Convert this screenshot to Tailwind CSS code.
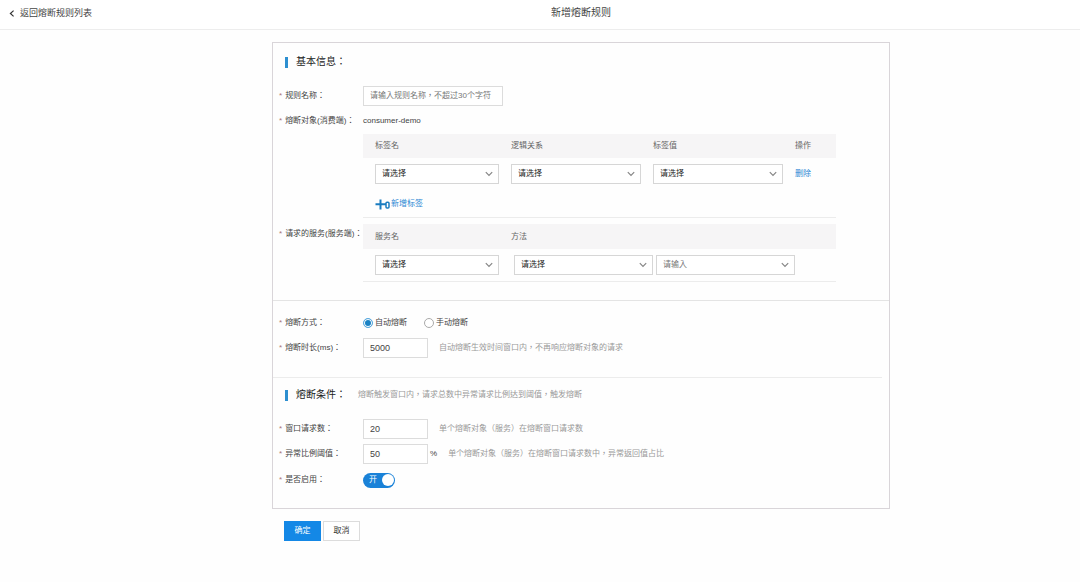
<!DOCTYPE html>
<html lang="zh-CN">
<head>
<meta charset="utf-8">
<meta name="viewport" content="width=device-width, initial-scale=1">
<title>新增熔断规则</title>
<script src="https://cdn.jsdelivr.net/npm/@tailwindcss/browser@4"></script>
</head>
<body class="min-h-screen bg-[#fefefe] font-['Liberation_Sans','Noto_Sans_CJK_TC',sans-serif] text-[8px] leading-3 text-[#444] [font-feature-settings:'locl'_0]">
<svg class="hidden" aria-hidden="true">
  <symbol id="chevron" viewBox="0 0 8 6"><path d="M0.8 1.2 L4 4.4 L7.2 1.2" fill="none" stroke="#858585" stroke-width="1.2"/></symbol>
</svg>

<header class="flex h-[30px] items-center border-b border-[#ededed] bg-white pb-[3px]">
  <a href="#" class="flex w-[82px] shrink-0 items-center gap-[5px] whitespace-nowrap pl-[9px] text-[9px]">
    <svg class="h-[7px] w-[6px] shrink-0" viewBox="0 0 6 7"><path d="M4.6 0.6 L1.4 3.5 L4.6 6.4" fill="none" stroke="#333" stroke-width="1.2"/></svg>
    返回熔断规则列表
  </a>
  <h1 class="flex-1 text-center text-[10px]">新增熔断规则</h1>
</header>

<main class="pt-3 pl-[82px]">
  <form class="mx-auto w-full max-w-[618px]">
    <div class="border border-[#d9d5d9]">

      <section class="border-b border-[#e4e4e4] pt-[9px] pb-[18px]">
        <h2 class="flex h-5 items-center gap-2 pl-[12px] text-[10px] text-[#222]"><span class="h-[11px] w-[3px] bg-[#2d8fd0]"></span>基本信息：</h2>

        <div class="mt-[14px] grid grid-cols-[90px_1fr] items-center">
          <label for="name" class="flex gap-[3px] pl-[6px]"><span class="text-[#a77]">*</span>规则名称：</label>
          <input id="name" type="text" placeholder="请输入规则名称，不超过30个字符" class="h-5 w-[140px] border border-[#dcdcdc] bg-white px-[6px] pb-[2px] placeholder:text-[#777]">
        </div>

        <div class="mt-[5px] grid h-5 grid-cols-[90px_1fr] items-center">
          <span class="flex gap-[3px] pl-[6px] whitespace-nowrap"><span class="text-[#a77]">*</span>熔断对象(消费端)：</span>
          <span>consumer-demo</span>
        </div>

        <div class="mt-[3px] pr-[53px] pl-[90px]">
          <table class="w-full table-fixed border-b border-[#ececec] text-left">
            <colgroup><col class="w-[136px]"><col class="w-[142px]"><col class="w-[142px]"><col></colgroup>
            <thead class="bg-[#f6f5f6] text-[#666]">
              <tr class="h-[24px]">
                <th class="pl-3 font-normal">标签名</th>
                <th class="pl-3 font-normal">逻辑关系</th>
                <th class="pl-3 font-normal">标签值</th>
                <th class="pl-3 font-normal">操作</th>
              </tr>
            </thead>
            <tbody>
              <tr>
                <td class="pt-[6px] pl-3"><div class="relative"><select aria-label="标签名" class="block h-5 w-full appearance-none border border-[#d6d6d6] bg-white px-[6px] text-[#222]"><option>请选择</option></select><svg class="pointer-events-none absolute top-[7px] right-[6px] h-[6px] w-2"><use href="#chevron"/></svg></div></td>
                <td class="pt-[6px] pl-3"><div class="relative"><select aria-label="逻辑关系" class="block h-5 w-full appearance-none border border-[#d6d6d6] bg-white px-[6px] text-[#222]"><option>请选择</option></select><svg class="pointer-events-none absolute top-[7px] right-[6px] h-[6px] w-2"><use href="#chevron"/></svg></div></td>
                <td class="pt-[6px] pl-3"><div class="relative"><select aria-label="标签值" class="block h-5 w-full appearance-none border border-[#d6d6d6] bg-white px-[6px] text-[#222]"><option>请选择</option></select><svg class="pointer-events-none absolute top-[7px] right-[6px] h-[6px] w-2"><use href="#chevron"/></svg></div></td>
                <td class="pt-[6px] pl-3"><button type="button" class="block text-[#2b88d4]">删除</button></td>
              </tr>
              <tr>
                <td colspan="4" class="pt-[10px] pb-[3px] pl-3">
                  <button type="button" class="flex h-5 items-center gap-[1px] text-[#2b88d4]">
                    <svg class="h-[11px] w-[15px]" viewBox="0 0 15 11"><path d="M0.5 5.3H11M5.5 0.5V10.5" fill="none" stroke="#1a7cc0" stroke-width="2"/><rect x="11" y="3.2" width="3" height="5.8" rx="1" fill="#fff" stroke="#1a7cc0" stroke-width="1.5"/></svg>
                    新增标签
                  </button>
                </td>
              </tr>
            </tbody>
          </table>
        </div>

        <div class="mt-[6px] grid grid-cols-[90px_1fr] items-start pr-[53px]">
          <span class="flex h-5 items-center gap-[3px] pl-[6px] whitespace-nowrap"><span class="text-[#a77]">*</span>请求的服务(服务端)：</span>
          <table class="w-full table-fixed border-b border-[#ececec] text-left">
            <colgroup><col class="w-[136px]"><col></colgroup>
            <thead class="bg-[#f6f5f6] text-[#666]">
              <tr class="h-[25px]">
                <th class="pl-3 font-normal">服务名</th>
                <th class="pl-3 font-normal">方法</th>
              </tr>
            </thead>
            <tbody>
              <tr>
                <td class="py-[6px] pl-3"><div class="relative"><select aria-label="服务名" class="block h-5 w-full appearance-none border border-[#d6d6d6] bg-white px-[6px] text-[#222]"><option>请选择</option></select><svg class="pointer-events-none absolute top-[7px] right-[6px] h-[6px] w-2"><use href="#chevron"/></svg></div></td>
                <td class="py-[6px] pr-[41px] pl-[15px]">
                  <div class="grid grid-cols-2 gap-[3px]">
                    <div class="relative"><select aria-label="方法" class="block h-5 w-full appearance-none border border-[#d6d6d6] bg-white px-[6px] text-[#222]"><option>请选择</option></select><svg class="pointer-events-none absolute top-[7px] right-[6px] h-[6px] w-2"><use href="#chevron"/></svg></div>
                    <div class="relative"><select aria-label="方法参数" class="block h-5 w-full appearance-none border border-[#d6d6d6] bg-white px-[6px] text-[#777]"><option>请输入</option></select><svg class="pointer-events-none absolute top-[7px] right-[6px] h-[6px] w-2"><use href="#chevron"/></svg></div>
                  </div>
                </td>
              </tr>
            </tbody>
          </table>
        </div>
      </section>

      <section class="mr-[7px] border-b border-[#ececec] pt-3 pb-[19px]">
        <div role="radiogroup" aria-labelledby="mode" class="grid h-5 grid-cols-[90px_1fr] items-center">
          <span id="mode" class="flex gap-[3px] pl-[6px]"><span class="text-[#a77]">*</span>熔断方式：</span>
          <div class="flex gap-[17px]">
            <label class="flex items-center gap-[2px]"><input type="radio" name="mode" checked class="size-[10px] appearance-none rounded-full border border-[#aaa] bg-white checked:border-[#5cabe0] checked:bg-[#1a82c4] checked:inset-shadow-[0_0_0_1px_#fff]">自动熔断</label>
            <label class="flex items-center gap-[2px]"><input type="radio" name="mode" class="size-[10px] appearance-none rounded-full border border-[#aaa] bg-white checked:border-[#5cabe0] checked:bg-[#1a82c4] checked:inset-shadow-[0_0_0_1px_#fff]">手动熔断</label>
          </div>
        </div>
        <div class="mt-[5px] grid grid-cols-[90px_1fr] items-center">
          <label for="duration" class="flex gap-[3px] pl-[6px]"><span class="text-[#a77]">*</span>熔断时长(ms)：</label>
          <div class="flex items-center gap-[11px]">
            <input id="duration" type="text" value="5000" class="h-5 w-[65px] border border-[#dcdcdc] bg-white px-[6px] text-[9px]">
            <span class="text-[#999]">自动熔断生效时间窗口内，不再响应熔断对象的请求</span>
          </div>
        </div>
      </section>

      <section class="pt-[7px] pb-[18px]">
        <div class="flex h-5 items-center gap-[12px] pl-[12px]">
          <h2 class="flex items-center gap-2 text-[10px] text-[#222]"><span class="h-[11px] w-[3px] bg-[#2d8fd0]"></span>熔断条件：</h2>
          <span class="text-[#999]">熔断触发窗口内，请求总数中异常请求比例达到阈值，触发熔断</span>
        </div>
        <div class="mt-[14px] grid grid-cols-[90px_1fr] items-center">
          <label for="count" class="flex gap-[3px] pl-[6px]"><span class="text-[#a77]">*</span>窗口请求数：</label>
          <div class="flex items-center gap-[11px]">
            <input id="count" type="text" value="20" class="h-5 w-[65px] border border-[#dcdcdc] bg-white px-[6px] text-[9px]">
            <span class="text-[#999]">单个熔断对象（服务）在熔断窗口请求数</span>
          </div>
        </div>
        <div class="mt-[5px] grid grid-cols-[90px_1fr] items-center">
          <label for="ratio" class="flex gap-[3px] pl-[6px]"><span class="text-[#a77]">*</span>异常比例阈值：</label>
          <div class="flex items-center">
            <input id="ratio" type="text" value="50" class="h-5 w-[65px] border border-[#dcdcdc] bg-white px-[6px] text-[9px]">
            <span class="pl-[2px]">%</span>
            <span class="pl-[11px] text-[#999]">单个熔断对象（服务）在熔断窗口请求数中，异常返回值占比</span>
          </div>
        </div>
        <div class="mt-[6px] grid h-5 grid-cols-[90px_1fr] items-center">
          <label for="enabled" class="flex gap-[3px] pl-[6px]"><span class="text-[#a77]">*</span>是否启用：</label>
          <label class="flex h-[15px] w-8 items-center justify-between rounded-full bg-[#1a82d8] pr-[1px] pl-[6px] text-white">
            <input id="enabled" type="checkbox" role="switch" checked class="sr-only">
            开
            <span class="size-3 rounded-full bg-white"></span>
          </label>
        </div>
      </section>
    </div>

    <div class="mt-3 flex gap-[2px] pl-[12px]">
      <button type="submit" class="h-5 w-[37px] bg-[#1488e6] text-white">确定</button>
      <button type="button" class="h-5 w-[37px] border border-[#dcdcdc] bg-white text-[#333]">取消</button>
    </div>
  </form>
</main>
</body>
</html>
